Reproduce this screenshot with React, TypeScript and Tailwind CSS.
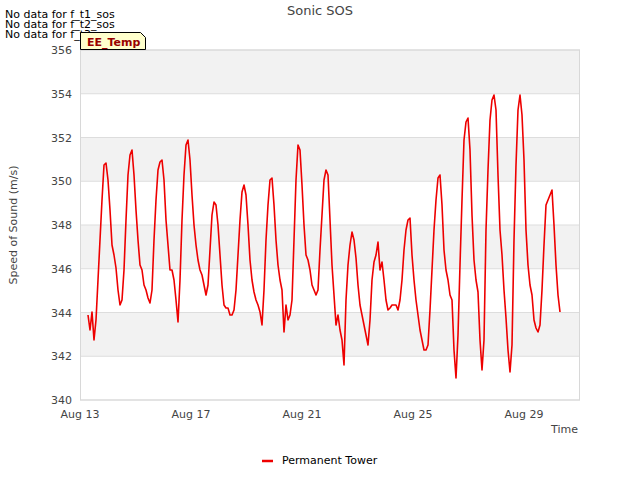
const pts = "88,315 90,330 92,312 94,340 96,320 98,280 100,240 102,200 104,165 106,163 108,180 110,210 112,245 114,255 116,268 118,290 120,305 122,300 124,270 126,220 128,175 130,155 132,150 134,175 136,210 138,240 140,265 142,270 144,285 146,290 148,298 150,303 152,290 154,240 156,200 158,170 160,162 162,160 164,180 166,220 168,245 170,270 172,270 174,280 176,300 178,322 180,280 182,220 184,175 186,145 188,140 190,160 192,195 194,225 196,245 198,260 200,270 202,275 204,285 206,295 208,285 210,250 212,215 214,202 216,205 218,225 220,255 222,285 224,305 226,308 228,308 230,315 232,315 234,310 236,290 238,255 240,220 242,192 244,185 246,195 248,225 250,260 252,280 254,292 256,300 258,305 260,312 262,325 264,290 266,240 268,205 270,180 272,178 274,205 276,240 278,265 280,280 282,290 284,332 286,305 288,320 290,315 292,300 294,240 296,180 298,145 300,150 302,185 304,225 306,255 308,260 310,270 312,285 314,290 316,295 318,290 320,250 322,215 324,180 326,170 328,175 330,220 332,265 334,295 336,325 338,315 340,330 342,340 344,365 346,300 348,265 350,245 352,232 354,240 356,258 358,285 360,305 362,315 364,325 366,335 368,345 370,320 372,280 374,262 376,255 378,242 380,270 382,262 384,280 386,300 388,310 390,308 392,305 394,305 396,305 398,310 400,300 402,280 404,250 406,230 408,220 410,218 412,255 414,280 416,300 418,315 420,330 422,340 424,350 426,350 428,345 430,310 432,270 434,230 436,200 438,178 440,175 442,205 444,250 446,270 448,280 450,295 452,300 454,350 456,378 458,335 460,265 462,200 464,140 466,122 468,118 470,150 472,215 474,260 476,280 478,292 480,340 482,370 484,340 486,230 488,170 490,120 492,100 494,95 496,110 498,175 500,230 502,255 504,290 506,318 508,350 510,372 512,345 514,240 516,165 518,110 520,95 522,115 524,160 526,230 528,265 530,285 532,295 534,320 536,328 538,332 540,325 542,290 544,245 546,205 548,200 550,195 552,190 554,225 556,265 558,295 560,312";

export default function App() {
  const yt = [356, 354, 352, 350, 348, 346, 344, 342, 340];
  const xt = [["Aug 13", 80], ["Aug 17", 191], ["Aug 21", 302], ["Aug 25", 413], ["Aug 29", 524]] as const;
  return (
    <div className="w-[640px] h-[480px] bg-white" style={{ fontFamily: '"DejaVu Sans", sans-serif' }}>
      <svg width="640" height="480" className="block">
        {yt.map((v, i) => {
          const y = 50 + i * 43.75;
          return (
            <g key={v}>
              {i < 8 && i % 2 === 0 && <rect x={80} y={y} width={500} height={43.75} fill="#f2f2f2" />}
              <line x1={80} x2={580} y1={y} y2={y} stroke="#dddddd" strokeWidth={1} />
              <text x={72} y={y + 4} textAnchor="end" fontSize={11} fill="#444">{v}</text>
            </g>
          );
        })}
        <rect x={80.5} y={50} width={499} height={350} fill="none" stroke="#d8d8d8" />
        {xt.map(([l, x]) => (
          <text key={l} x={x} y={418} textAnchor="middle" fontSize={11} fill="#444">{l}</text>
        ))}
        <text x={578} y={433} textAnchor="end" fontSize={11} fill="#444">Time</text>
        <text x={320} y={15} textAnchor="middle" fontSize={13} fill="#444">Sonic SOS</text>
        <text transform="translate(17,225) rotate(-90)" textAnchor="middle" fontSize={11} fill="#444">Speed of Sound (m/s)</text>
        <polyline points={pts} fill="none" stroke="#ee0000" strokeWidth={1.6} strokeLinejoin="round" />
        <text x={5} y={18} fontSize={11} fill="#000">No data for f_t1_sos</text>
        <text x={5} y={28} fontSize={11} fill="#000">No data for f_t2_sos</text>
        <text x={5} y={38} fontSize={11} fill="#000">No data for f_t3_sos</text>
        <path d="M80.5,32.5 H140.5 L145.5,37.5 V49.5 H80.5 Z" fill="#ffffcc" stroke="#000" />
        <text x={87} y={46} fontSize={11} fontWeight="bold" fill="#990000">EE_Temp</text>
        <line x1={262} x2={273} y1={461} y2={461} stroke="#ee0000" strokeWidth={2.5} />
        <text x={282} y={464} fontSize={11} fill="#000">Permanent Tower</text>
      </svg>
    </div>
  );
}
